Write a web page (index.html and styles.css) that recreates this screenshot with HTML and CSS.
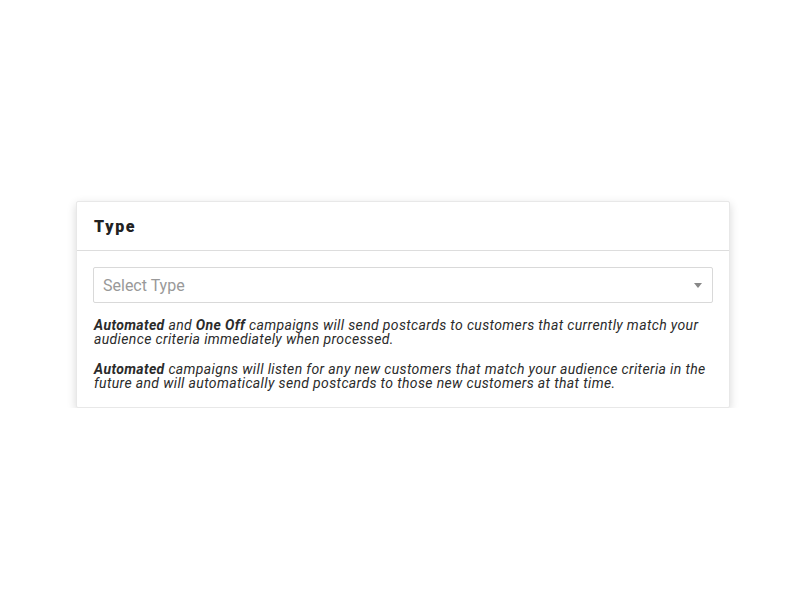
FILE: index.html
```html
<!DOCTYPE html>
<html>
<head>
<meta charset="utf-8">
<link rel="stylesheet" href="styles.css">
</head>
<body>
<div class="page">
  <section class="card">
    <header class="card-header"><h2 class="card-title">Type</h2></header>
    <div class="card-body">
      <div class="select">
        <span class="select-placeholder">Select Type</span>
        <span class="select-caret"></span>
      </div>
      <p class="note"><b>Automated</b> and <b>One Off</b> campaigns will send postcards to customers that currently match your audience criteria immediately when processed.</p>
      <p class="note"><b>Automated</b> campaigns will listen for any new customers that match your audience criteria in the future and will automatically send postcards to those new customers at that time.</p>
    </div>
  </section>
</div>
</body>
</html>
```
FILE: styles.css
```css
html, body { margin: 0; padding: 0; background: #fff; }
body { font-family: Roboto, "Liberation Sans", sans-serif; color: #333; }
.page { padding: 201px 0 0 76px; }
.card {
  width: 654px;
  background: #fff;
  border: 1px solid #e8e8e8;
  border-radius: 2px;
  box-shadow: 0 3px 10px rgba(0,0,0,0.16);
  box-sizing: border-box;
}
.card-header {
  height: 49px;
  border-bottom: 1px solid #ddd;
  display: flex;
  align-items: center;
  padding: 0 17px;
  box-sizing: border-box;
}
.card-title {
  margin: 0;
  font-family: Roboto, "DejaVu Sans", sans-serif;
  font-weight: 900;
  font-size: 16px;
  letter-spacing: 1.7px;
  color: #222;
}
.card-body { padding: 16px 16px 17px 16px; }
.select {
  height: 36px;
  border: 1px solid #d9d9d9;
  border-radius: 2px;
  box-sizing: border-box;
  display: flex;
  align-items: center;
  justify-content: space-between;
  padding: 0 10px 0 9px;
}
.select-placeholder { font-size: 16px; color: #999; }
.select-caret {
  width: 0; height: 0;
  border-left: 4px solid transparent;
  border-right: 4px solid transparent;
  border-top: 5px solid #888;
}
.note {
  margin: 16px 0 0 1px;
  font-size: 14px;
  line-height: 13.5px;
  font-style: italic;
  letter-spacing: 0.36px;
  color: #2b2b2b;
}
.note + .note { margin-top: 17px; }
.note b { font-weight: bold; }
```
